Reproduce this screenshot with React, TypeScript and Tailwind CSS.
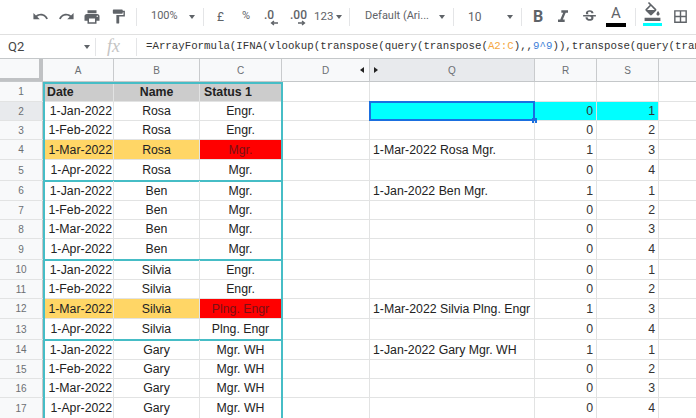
import { MdUndo, MdRedo, MdPrint, MdFormatPaint, MdFormatColorFill, MdBorderAll, MdFormatItalic, MdStrikethroughS } from 'react-icons/md';

type Row = {
  n: number;
  h: string;
  date?: string;
  name?: string;
  status?: string;
  q?: string;
  r?: number;
  s?: number;
  highlight?: boolean;
};

const groups: Row[][] = [
  [
    { n: 1, h: 'h-[20px]' },
    { n: 2, h: 'h-[19px]', date: '1-Jan-2022', name: 'Rosa', status: 'Engr.', r: 0, s: 1 },
    { n: 3, h: 'h-[19px]', date: '1-Feb-2022', name: 'Rosa', status: 'Engr.', r: 0, s: 2 },
    { n: 4, h: 'h-[20px]', date: '1-Mar-2022', name: 'Rosa', status: 'Mgr.', q: '1-Mar-2022 Rosa Mgr.', r: 1, s: 3, highlight: true },
    { n: 5, h: 'h-[21px]', date: '1-Apr-2022', name: 'Rosa', status: 'Mgr.', r: 0, s: 4 },
  ],
  [
    { n: 6, h: 'h-[20px]', date: '1-Jan-2022', name: 'Ben', status: 'Mgr.', q: '1-Jan-2022 Ben Mgr.', r: 1, s: 1 },
    { n: 7, h: 'h-[19px]', date: '1-Feb-2022', name: 'Ben', status: 'Mgr.', r: 0, s: 2 },
    { n: 8, h: 'h-[19px]', date: '1-Mar-2022', name: 'Ben', status: 'Mgr.', r: 0, s: 3 },
    { n: 9, h: 'h-[21px]', date: '1-Apr-2022', name: 'Ben', status: 'Mgr.', r: 0, s: 4 },
  ],
  [
    { n: 10, h: 'h-[20px]', date: '1-Jan-2022', name: 'Silvia', status: 'Engr.', r: 0, s: 1 },
    { n: 11, h: 'h-[19px]', date: '1-Feb-2022', name: 'Silvia', status: 'Engr.', r: 0, s: 2 },
    { n: 12, h: 'h-[20px]', date: '1-Mar-2022', name: 'Silvia', status: 'Plng. Engr', q: '1-Mar-2022 Silvia Plng. Engr', r: 1, s: 3, highlight: true },
    { n: 13, h: 'h-[21px]', date: '1-Apr-2022', name: 'Silvia', status: 'Plng. Engr', r: 0, s: 4 },
  ],
  [
    { n: 14, h: 'h-[20px]', date: '1-Jan-2022', name: 'Gary', status: 'Mgr. WH', q: '1-Jan-2022 Gary Mgr. WH', r: 1, s: 1 },
    { n: 15, h: 'h-[19px]', date: '1-Feb-2022', name: 'Gary', status: 'Mgr. WH', r: 0, s: 2 },
    { n: 16, h: 'h-[19px]', date: '1-Mar-2022', name: 'Gary', status: 'Mgr. WH', r: 0, s: 3 },
    { n: 17, h: 'h-[21px]', date: '1-Apr-2022', name: 'Gary', status: 'Mgr. WH', r: 0, s: 4 },
  ],
];

function Caret({ className = '' }: { className?: string }) {
  return <span className={`block w-0 h-0 border-x-[3.5px] border-x-transparent border-t-[4px] border-t-[#5f6368] ${className}`} />;
}

function Sep({ className = '' }: { className?: string }) {
  return <span className={`block w-px h-[18px] bg-[#e4e5e7] shrink-0 ${className}`} />;
}

function DecimalArrow({ right }: { right?: boolean }) {
  return (
    <svg width="8" height="6" viewBox="0 0 8 6" className={`absolute top-[13px] ${right ? 'right-0' : 'right-[1px]'}`}>
      <path d={right ? 'M0 3h6M4 1l2.5 2L4 5' : 'M8 3H2M4 1L1.5 3 4 5'} fill="none" stroke="#5f6368" strokeWidth="1.3" />
    </svg>
  );
}

function Toolbar() {
  return (
    <div className="flex items-center h-[35px] border-b border-[#e0e0e0] text-[#5f6368] pl-[32px] pb-[1px] text-[11px] font-['Roboto',sans-serif]">
      <MdUndo className="w-[17px] h-[17px] shrink-0" />
      <MdRedo className="w-[17px] h-[17px] shrink-0 ml-[9px]" />
      <MdPrint className="w-[18px] h-[18px] shrink-0 ml-[8px]" />
      <MdFormatPaint className="w-[17px] h-[17px] shrink-0 ml-[9px]" />
      <Sep className="ml-[9px]" />
      <span className="ml-[14px] w-[26px]">100%</span>
      <Caret className="ml-[12px]" />
      <Sep className="ml-[8px]" />
      <span className="ml-[13px] w-[7px] text-[12px]">£</span>
      <span className="ml-[18px] w-[9px]">%</span>
      <span className="relative ml-[13px] w-[15px] h-[20px] text-[12px] font-medium leading-[16px]">
        .0
        <DecimalArrow />
      </span>
      <span className="relative ml-[11px] w-[16px] h-[20px] text-[12px] font-medium leading-[16px]">
        .00
        <DecimalArrow right />
      </span>
      <span className="ml-[8px] w-[20px] text-[11.5px]">123</span>
      <Caret className="ml-[2px]" />
      <Sep className="ml-[7px]" />
      <span className="ml-[15px] w-[64px] whitespace-nowrap">Default (Ari...</span>
      <Caret className="ml-[10px]" />
      <Sep className="ml-[8px]" />
      <span className="ml-[14px] w-[13px] text-[12px]">10</span>
      <Caret className="ml-[26px]" />
      <Sep className="ml-[8px]" />
      <span className="ml-[11px] w-[12px] text-[16px] font-bold">B</span>
      <MdFormatItalic className="w-[20px] h-[20px] shrink-0 ml-[8px]" />
      <MdStrikethroughS className="w-[17px] h-[17px] shrink-0 ml-[8px]" />
      <span className="relative ml-[8px] w-[20px] h-[28px] shrink-0">
        <span className="block text-center text-[15px] leading-[20px]">A</span>
        <span className="absolute left-0 right-0 top-[20px] h-[4px] bg-black" />
      </span>
      <Sep className="ml-[9px]" />
      <span className="relative ml-[7px] w-[19px] h-[28px] shrink-0">
        <MdFormatColorFill className="w-[19px] h-[19px] mt-[-1px]" />
        <span className="absolute left-0 right-0 top-[20px] h-[3px] bg-[#00ffff]" />
      </span>
      <MdBorderAll className="w-[17px] h-[17px] shrink-0 ml-[10px]" />
    </div>
  );
}

function FormulaBar() {
  return (
    <div className="flex items-center h-[24px] border-b border-[#c4c7c9] whitespace-nowrap overflow-hidden">
      <span className="ml-[8px] w-[76px] shrink-0 text-[13px] text-[#444] font-['Roboto',sans-serif]">Q2</span>
      <Caret />
      <Sep className="ml-[5px]" />
      <span className="ml-[11px] w-[29px] shrink-0 text-[18px] italic text-[#c4c4c4] font-['Liberation_Serif',serif]">fx</span>
      <Sep />
      <span className="ml-[9px] text-[10.75px] text-[#333] font-['Liberation_Mono',monospace]">
        =ArrayFormula(IFNA(vlookup(transpose(query(transpose(<span className="text-[#f5a742]">A2:C</span>),,<span className="text-[#3f7fd8]">9^9</span>)),transpose(query(tran
      </span>
    </div>
  );
}

function ColumnHeader() {
  const cell = 'flex items-center justify-center border-r border-[#c9cbcd] shrink-0';
  return (
    <div className="flex h-[23px] border-b border-[#c4c7c9] bg-[#f8f9fa] text-[10px] text-[#6b6f73]">
      <div className="w-[43px] shrink-0 border-r-[4px] border-b-[3px] border-[#c0c2c4]" />
      <div className={`${cell} w-[71px]`}>A</div>
      <div className={`${cell} w-[86px]`}>B</div>
      <div className={`${cell} w-[82px]`}>C</div>
      <div className="relative flex items-center justify-center w-[88px] border-r border-[#c9cbcd] shrink-0">
        D
        <span className="absolute right-[5px] top-[8px] w-0 h-0 border-y-[3px] border-y-transparent border-r-[4px] border-r-[#222]" />
      </div>
      <div className={`${cell} relative w-[165px] bg-[#e8eaed]`}>
        Q
        <span className="absolute left-[4px] top-[8px] w-0 h-0 border-y-[3px] border-y-transparent border-l-[4px] border-l-[#222]" />
      </div>
      <div className={`${cell} w-[62px]`}>R</div>
      <div className={`${cell} w-[62px]`}>S</div>
    </div>
  );
}

function SheetRow({ row }: { row: Row }) {
  const isHeader = row.n === 1;
  const selected = row.n === 2;
  // the taller rows already sit a pixel lower
  const nudge = row.h === 'h-[21px]' ? '' : 'pt-[1px]';
  const cell = `flex items-center shrink-0 h-full border-r border-[#e2e3e3] ${nudge}`;
  const abBg = isHeader ? 'bg-[#cccccc]' : row.highlight ? 'bg-[#ffd666]' : '';
  const statusBg = isHeader ? 'bg-[#cccccc]' : row.highlight ? 'bg-[#ff0000] text-[#7a1014]' : '';
  const cyan = selected ? 'bg-[#00ffff]' : '';

  return (
    <div className={`flex ${row.h} border-b border-[#e2e3e3] text-[12.3px] text-[#222]`}>
      <div className={`flex items-center justify-center w-[43px] shrink-0 h-full border-r border-[#c4c7c9] text-[10px] text-[#6b6f73] ${selected ? 'bg-[#e8eaed]' : 'bg-[#f8f9fa]'}`}>
        {row.n}
      </div>
      <div className={`${cell} w-[71px] ${abBg} ${isHeader ? 'pl-[4px] font-bold' : 'justify-end pr-[1px]'}`}>{isHeader ? 'Date' : row.date}</div>
      <div className={`${cell} w-[86px] justify-center ${abBg} ${isHeader ? 'font-bold' : ''}`}>{isHeader ? 'Name' : row.name}</div>
      <div className={`${cell} w-[82px] ${statusBg} ${isHeader ? 'pl-[4px] font-bold' : 'justify-center'}`}>{isHeader ? 'Status 1' : row.status}</div>
      <div className={`${cell} w-[88px]`} />
      <div className={`${cell} relative w-[165px] pl-[3px] whitespace-nowrap ${cyan}`}>
        {row.q}
        {selected && (
          <>
            <span className="absolute inset-[-1px] border-2 border-[#1a6fe0]" />
            <span className="absolute right-[-3px] bottom-[-3px] w-[5px] h-[5px] bg-[#1a6fe0]" />
          </>
        )}
      </div>
      <div className={`${cell} w-[62px] justify-end pr-[3px] text-[#333] ${cyan}`}>{row.r}</div>
      <div className={`${cell} w-[62px] justify-end pr-[3px] text-[#333] ${cyan}`}>{row.s}</div>
    </div>
  );
}

export default function App() {
  return (
    <div className="w-[696px] h-[418px] overflow-hidden bg-white font-['Liberation_Sans',sans-serif]">
      <Toolbar />
      <FormulaBar />
      <ColumnHeader />
      {groups.map((rows, i) => (
        <div key={i} className="relative">
          {rows.map((row) => (
            <SheetRow key={row.n} row={row} />
          ))}
          <div className={`absolute left-[43px] top-0 bottom-[-1px] w-[240px] border-x-2 border-b-2 border-[#46bdc6] ${i === 0 ? 'border-t-2' : ''}`} />
        </div>
      ))}
    </div>
  );
}
